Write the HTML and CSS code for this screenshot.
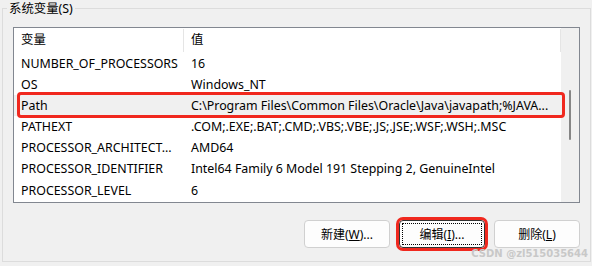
FILE: index.html
```html
<!DOCTYPE html>
<html lang="zh-CN">
<head>
    <meta charset="UTF-8">
    <title>系统变量</title>
    <link rel="stylesheet" href="styles.css">
</head>
<body>
    <fieldset class="group">
        <legend>系统变量(S)</legend>
        <div class="list">
            <div class="list-body">
                <div class="row head">
                    <span class="cell">变量</span>
                    <span class="cell">值</span>
                </div>
                <div class="row">
                    <span class="cell">NUMBER_OF_PROCESSORS</span>
                    <span class="cell">16</span>
                </div>
                <div class="row">
                    <span class="cell">OS</span>
                    <span class="cell">Windows_NT</span>
                </div>
                <div class="row selected">
                    <span class="cell">Path</span>
                    <span class="cell">C:\Program Files\Common Files\Oracle\Java\javapath;%JAVA...</span>
                </div>
                <div class="row">
                    <span class="cell">PATHEXT</span>
                    <span class="cell">.COM;.EXE;.BAT;.CMD;.VBS;.VBE;.JS;.JSE;.WSF;.WSH;.MSC</span>
                </div>
                <div class="row">
                    <span class="cell">PROCESSOR_ARCHITECT...</span>
                    <span class="cell">AMD64</span>
                </div>
                <div class="row">
                    <span class="cell">PROCESSOR_IDENTIFIER</span>
                    <span class="cell">Intel64 Family 6 Model 191 Stepping 2, GenuineIntel</span>
                </div>
                <div class="row">
                    <span class="cell">PROCESSOR_LEVEL</span>
                    <span class="cell">6</span>
                </div>
            </div>
            <div class="scrollbar"><div class="thumb"></div></div>
        </div>
        <div class="buttons">
            <button>新建(<u>W</u>)...</button>
            <button class="default">编辑(<u>I</u>)...</button>
            <button>删除(<u>L</u>)</button>
        </div>
    </fieldset>
    <div class="watermark">CSDN @zl515035644</div>
</body>
</html>
```

FILE: styles.css
```css
body {
    font-family: "Noto Sans", "Noto Sans CJK SC", sans-serif;
    font-size: 12.4px;
    color: #000;
    background-color: #f0f0f0;
    margin: 0;
    padding: 0;
    width: 592px;
    height: 266px;
    position: relative;
    overflow: hidden;
}

.group {
    width: 589px;
    margin: 0 0 0 2px;
    padding: 0 10px 13px 10px;
    border: 1px solid #dcdcdc;
    box-sizing: border-box;
}

.group legend {
    margin-left: -6px;
    padding: 0 2px;
    line-height: 17px;
}

.list {
    display: flex;
    height: 176px;
    margin-top: 10px;
    background-color: #fff;
    border: 1px solid #828790;
    box-sizing: border-box;
}

.list-body {
    flex: 1;
}

.row {
    display: grid;
    grid-template-columns: 170px 1fr;
    height: 21.2px;
    line-height: 21.2px;
    position: relative;
    white-space: nowrap;
}

.cell {
    padding-left: 7px;
    overflow: hidden;
}

.row.head {
    height: 24.5px;
    line-height: 24px;
}

.row.head .cell {
    border-right: 1px solid #e5e5e5;
    margin: 1px 0;
    line-height: 22px;
}

.row.selected {
    background-color: #f0f0f0;
}

/* red annotation box */
.row.selected::after {
    content: "";
    position: absolute;
    left: 3px;
    right: -4px;
    top: -3px;
    bottom: -2px;
    border: 3px solid #f0281e;
    border-radius: 4px;
    z-index: 1;
}

.scrollbar {
    width: 18px;
    background-color: #f0f0f0;
    position: relative;
}

.thumb {
    position: absolute;
    left: 8px;
    top: 62px;
    width: 2px;
    height: 50px;
    background-color: #868686;
    border-radius: 1px;
}

.buttons {
    display: flex;
    justify-content: flex-end;
    gap: 9px;
    margin-top: 17px;
}

button {
    width: 86px;
    height: 28px;
    font-family: inherit;
    font-size: 12px;
    color: #000;
    background-color: #fdfdfd;
    border: 1px solid #d0d0d0;
    border-radius: 4px;
    padding: 0;
    position: relative;
}

button u {
    text-underline-offset: 1px;
}

button.default {
    border-color: #333;
    outline: 3px solid #f0281e;
    outline-offset: 0;
}

button.default::before {
    content: "";
    position: absolute;
    left: 2px;
    right: 2px;
    top: 2px;
    bottom: 2px;
    border: 1px dotted #000;
}

.watermark {
    position: absolute;
    right: 4px;
    top: 248px;
    font-family: "DejaVu Sans", sans-serif;
    font-size: 10px;
    font-weight: bold;
    color: #c8c8c8;
}
```
